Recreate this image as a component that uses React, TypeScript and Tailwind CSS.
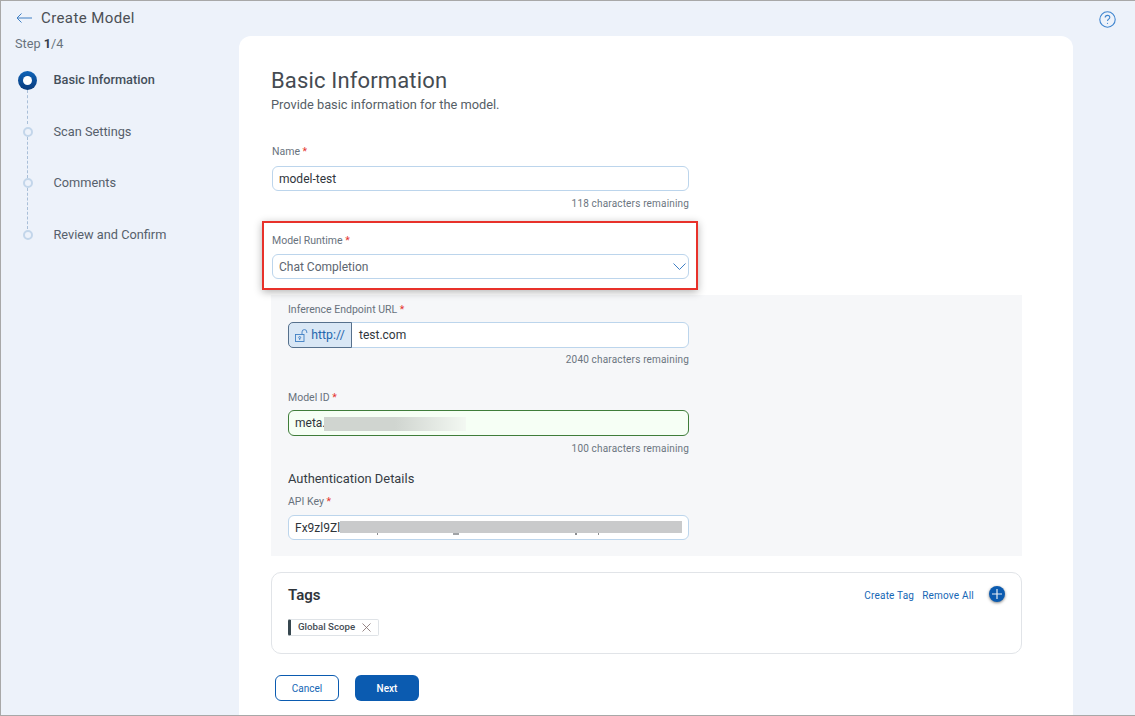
import React from "react";

function Label({ text, className = "" }: { text: string; className?: string }) {
  return (
    <div className={`text-[10.5px] leading-[14px] text-[#68727d] ${className}`}>
      {text} <span className="text-[#e5322d]">*</span>
    </div>
  );
}

function Counter({ text, className = "" }: { text: string; className?: string }) {
  return <div className={`text-right text-[10px] leading-[14px] tracking-[0.17px] text-[#6b7580] ${className}`}>{text}</div>;
}

function Step({ label, active, last }: { label: string; active?: boolean; last?: boolean }) {
  return (
    <div className="flex h-[51.7px] items-start">
      <div className="relative flex w-[28px] justify-center">
        {active ? (
          <div className="z-10 -ml-[1px] flex h-[19px] w-[19px] items-center justify-center rounded-full bg-gradient-to-b from-[#0f64b8] to-[#0a3c7c]">
            <div className="h-[9px] w-[9px] rounded-full bg-white" />
          </div>
        ) : (
          <div className="z-10 mt-[4px] h-[10px] w-[10px] rounded-full border-[2.5px] border-[#c3d6ea] bg-[#edf2fa]" />
        )}
        {!last && <div className={`absolute left-[13px] ${active ? "top-[19px] h-[34px]" : "top-[14px] h-[41px]"} border-l border-dashed border-[#a9bfd8]`} />}
      </div>
      <div className={`ml-[11.5px] text-[12.75px] leading-[17px] ${active ? "font-medium text-[#444f5a]" : "text-[#56606b]"}`}>{label}</div>
    </div>
  );
}

export default function App() {
  return (
    <div className="flex h-[716px] w-[1135px] overflow-hidden border border-[#a8a8a8] border-r-0 bg-[#edf2fa] font-['Roboto',sans-serif]">
      <aside className="w-[238px] shrink-0">
        <div className="ml-[15px] mt-[8px] flex h-[18px] items-center">
          <svg width="16" height="10" viewBox="0 0 16 10" fill="none" stroke="#3f7fc4" strokeWidth="1">
            <path d="M16 5H1M5.5 0.5L1 5l4.5 4.5" />
          </svg>
          <span className="ml-[9px] text-[15px] tracking-[0.4px] text-[#4b4f55]">Create Model</span>
        </div>
        <div className="ml-[14px] mt-[8px] text-[12.7px] leading-[17px] text-[#68727d]">
          Step <b className="font-bold text-[#333d47]">1</b>/4
        </div>
        <div className="ml-[13px] mt-[19px]">
          <Step label="Basic Information" active />
          <Step label="Scan Settings" />
          <Step label="Comments" />
          <Step label="Review and Confirm" last />
        </div>
      </aside>

      <main className="mt-[35px] h-[700px] w-[834px] shrink-0 rounded-t-[12px] bg-white pl-[32px] pr-[51px]">
        <h1 className="mt-[30px] text-[22px] leading-[30px] tracking-[0.15px] text-[#454b52]">Basic Information</h1>
        <p className="mt-[1px] text-[12.8px] leading-[16px] text-[#565e66]">Provide basic information for the model.</p>

        <div className="ml-[1px] mt-[32px] w-[417px]">
          <Label text="Name" />
          <div className="mt-[7px] flex h-[25px] items-center rounded-[6px] border border-[#bcd5ec] px-[6px] text-[12px] text-[#2f353b]">model-test</div>
          <Counter text="118 characters remaining" className="mt-[6px]" />
        </div>

        <div className="relative z-10 mb-[5px] ml-[-9px] mt-[10px] h-[69px] w-[436px] border-2 border-[#e8312a] bg-white pl-[8px] pt-[11px] shadow-[0_2px_8px_rgba(0,0,0,0.3)]">
          <Label text="Model Runtime" />
          <div className="mt-[6px] flex h-[25px] w-[417px] items-center justify-between rounded-[6px] border border-[#bcd5ec] pl-[6px] pr-[2px] text-[12px] text-[#5d6670]">
            Chat Completion
            <svg width="13" height="7" viewBox="0 0 13 7" fill="none" stroke="#3f7fc4" strokeWidth="1">
              <path d="M0.5 0.5L6.5 6.5L12.5 0.5" />
            </svg>
          </div>
        </div>

        <section className="h-[261px] w-[751px] bg-[#f6f7f9] pl-[17px] pt-[8px]">
          <div className="w-[401px]">
            <Label text="Inference Endpoint URL" />
            <div className="mt-[5px] flex h-[26px] rounded-[6px] border border-[#bcd5ec] bg-white">
              <div className="-my-px -ml-px flex w-[64px] items-center justify-center gap-[3px] rounded-l-[5px] border border-[#56708c] bg-[#d9e7f5] text-[12.3px] text-[#1f66ad]">
                <svg width="13" height="13" viewBox="0 0 13 13" fill="none" stroke="#3f7fc4" strokeWidth="0.9">
                  <rect x="0.5" y="5.5" width="8.5" height="7" />
                  <circle cx="4.7" cy="8.5" r="1" />
                  <path d="M4.7 9.5v1.5M7 5.5V3a2.4 2.4 0 0 1 4.8 0v1" />
                </svg>
                http://
              </div>
              <div className="flex flex-1 items-center pl-[7px] text-[12px] text-[#2f353b]">test.com</div>
            </div>
            <Counter text="2040 characters remaining" className="mt-[5px]" />

            <Label text="Model ID" className="mt-[24px]" />
            <div className="relative mt-[5px] flex h-[26px] items-center rounded-[6px] border border-[#3f7d3a] bg-[#f6fff5] px-[6px] text-[12px] text-[#2f353b]">
              meta.
              <div className="absolute left-[35px] top-[6px] h-[14px] w-[142px] bg-gradient-to-r from-[#d0d5d0] via-[#d0d5d0] to-[#f3f8f2]" />
            </div>
            <Counter text="100 characters remaining" className="mt-[6px]" />

            <div className="mt-[14px] text-[12.9px] leading-[18px] text-[#353c44]">Authentication Details</div>
            <Label text="API Key" className="mt-[7px]" />
            <div className="relative mt-[6px] flex h-[25px] items-center rounded-[6px] border border-[#bcd5ec] bg-white px-[6px] text-[12px] text-[#2f353b]">
              Fx9zl9Zl
              <div className="absolute left-[51px] top-[5px] h-[12px] w-[342px] bg-[#c9cacb]" />
              <div className="absolute left-[88px] top-[17px] h-[2px] w-[1px] bg-[#8a8d90]" />
              <div className="absolute left-[164px] top-[17px] h-[2px] w-[6px] bg-[#a0a3a6]" />
              <div className="absolute left-[286px] top-[17px] h-[2px] w-[2px] bg-[#8a8d90]" />
              <div className="absolute left-[309px] top-[17px] h-[2px] w-[1px] bg-[#8a8d90]" />
            </div>
          </div>
        </section>

        <section className="mt-[16px] h-[82px] w-[751px] rounded-[10px] border border-[#e1e4e8] pl-[16px] pr-[16px] pt-[13px]">
          <div className="flex items-start justify-between">
            <div className="text-[15px] font-semibold leading-[18px] text-[#2f353b]">Tags</div>
            <div className="flex items-center">
              <span className="mt-[2px] text-[10px] tracking-[0.2px] text-[#1566b5]">Create Tag</span>
              <span className="ml-[8px] mt-[2px] text-[10px] tracking-[0.2px] text-[#1566b5]">Remove All</span>
              <div className="-mt-[1px] ml-[15px] flex h-[16px] w-[16px] items-center justify-center rounded-full bg-[#0b5bb0] shadow-[0_1px_3px_rgba(0,0,0,0.5)]">
                <svg width="10" height="10" viewBox="0 0 10 10" stroke="#e8eef5" strokeWidth="1.2">
                  <path d="M5 0v10M0 5h10" />
                </svg>
              </div>
            </div>
          </div>
          <div className="mt-[15px] flex h-[17px] w-[91px] items-center rounded-[2px] border border-[#dfe3e7] border-l-[3px] border-l-[#37474f] pl-[7px] text-[9.7px] font-medium text-[#454c54]">
            Global Scope
            <svg className="ml-[7px]" width="9" height="9" viewBox="0 0 9 9" stroke="#7d6a6a" strokeWidth="0.8">
              <path d="M0.5 0.5l8 8M8.5 0.5l-8 8" />
            </svg>
          </div>
        </section>

        <div className="ml-[4px] mt-[21px] flex gap-[16px]">
          <button className="h-[26px] w-[64px] rounded-[6px] border border-[#0b5bb0] text-[10px] text-[#1566b5]">Cancel</button>
          <button className="h-[26px] w-[64px] rounded-[6px] bg-[#0b5bb0] text-[10px] font-medium text-white">Next</button>
        </div>
      </main>

      <div className="flex flex-1 justify-end pr-[19px] pt-[10px]">
        <svg width="17" height="17" viewBox="0 0 17 17" fill="none" stroke="#3f85cf" strokeWidth="1.1">
          <circle cx="8.5" cy="8.5" r="7.7" />
          <path d="M6.2 6.6c0-1.4 1-2.2 2.3-2.2s2.3.8 2.3 2c0 1.7-2.3 1.7-2.3 3.5" />
          <circle cx="8.5" cy="12.3" r="0.6" fill="#3f85cf" stroke="none" />
        </svg>
      </div>
    </div>
  );
}
